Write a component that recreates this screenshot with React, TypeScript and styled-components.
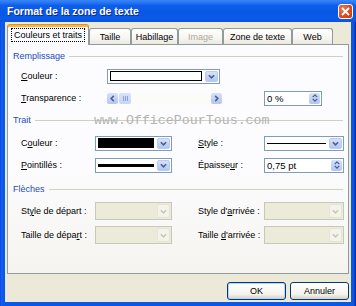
import React, { FC, ReactNode } from "react";
import styled, { createGlobalStyle } from "styled-components";

const GlobalStyle = createGlobalStyle`
  html, body { margin: 0; padding: 0; background: #0a4fd8; }
  body { font-family: "Liberation Sans", Arial, sans-serif; font-size: 9px; color: #000; }
  * { box-sizing: border-box; }
`;

const Chevron: FC<{ dir: "down" | "up" | "left" | "right"; color?: string; size?: number }> = ({ dir, color = "#4d6185", size = 7 }) => {
  const rot = { down: 0, up: 180, left: 90, right: -90 }[dir];
  return (
    <svg width={size} height={size} viewBox="0 0 8 8" style={{ transform: `rotate(${rot}deg)` }}>
      <path d="M1 2.5 L4 5.5 L7 2.5" fill="none" stroke={color} strokeWidth="1.8" />
    </svg>
  );
};

const Dropdown: FC<{ width: number; height: number; disabled?: boolean; children?: ReactNode }> = ({ width, height, disabled, children }) => (
  <DropBox $w={width} $h={height} $disabled={disabled}>
    <DropContent>{children}</DropContent>
    <ArrowBtn $disabled={disabled}>
      <Chevron dir="down" color={disabled ? "#c9c7ba" : "#4d6185"} />
    </ArrowBtn>
  </DropBox>
);

const Spin: FC<{ width: number; value: string }> = ({ width, value }) => (
  <SpinBox $w={width}>
    <SpinText>{value}</SpinText>
    <SpinBtns>
      <Chevron dir="up" size={6} />
      <Chevron dir="down" size={6} />
    </SpinBtns>
  </SpinBox>
);

const Slider: FC = () => (
  <Track>
    <SlideBtn><Chevron dir="left" /></SlideBtn>
    <Thumb>
      <Grip /><Grip /><Grip />
    </Thumb>
    <TrackSpace />
    <SlideBtn><Chevron dir="right" /></SlideBtn>
  </Track>
);

const App: FC = () => (
  <>
    <GlobalStyle />
    <Window>
      <TitleBar>
        <Title>Format de la zone de texte</Title>
        <CloseBtn>
          <svg width="9" height="9" viewBox="0 0 9 9">
            <path d="M1 1 L8 8 M8 1 L1 8" stroke="#fff" strokeWidth="1.8" />
          </svg>
        </CloseBtn>
      </TitleBar>
      <Client>
        <TabRow>
          <Tab $w={82} $active><Focus>Couleurs et traits</Focus></Tab>
          <Tab $w={42}>Taille</Tab>
          <Tab $w={47}>Habillage</Tab>
          <Tab $w={45} $disabled>Image</Tab>
          <Tab $w={69}>Zone de texte</Tab>
          <Tab $w={41}>Web</Tab>
        </TabRow>
        <Panel>
          <Header $mt={0}>Remplissage</Header>
          <Row $cols="86px auto" $h={16} $mt={5}>
            <Label><u>C</u>ouleur :</Label>
            <Dropdown width={113} height={15}><Swatch $fill="#fff" /></Dropdown>
          </Row>
          <Row $cols="86px 115px 42px 58px" $h={16} $mt={6}>
            <Label><u>T</u>ransparence :</Label>
            <Slider />
            <span />
            <Spin width={58} value="0 %" />
          </Row>

          <Header $mt={7}>Trait</Header>
          <Row $cols="74px 77px 26px 66px 80px" $h={16} $mt={8}>
            <Label>C<u>o</u>uleur :</Label>
            <Dropdown width={77} height={15}><Swatch $fill="#000" /></Dropdown>
            <span />
            <Label><u>S</u>tyle :</Label>
            <Dropdown width={80} height={15}><LineSample $thick={1} /></Dropdown>
          </Row>
          <Row $cols="74px 77px 26px 66px 80px" $h={16} $mt={6}>
            <Label><u>P</u>ointillés :</Label>
            <Dropdown width={77} height={15}><LineSample $thick={3} /></Dropdown>
            <span />
            <Label>Épaisse<u>u</u>r :</Label>
            <Spin width={80} value="0,75 pt" />
          </Row>

          <Header $mt={9}>Flèches</Header>
          <Row $cols="74px 77px 26px 66px 80px" $h={18} $mt={6}>
            <Label>St<u>y</u>le de départ :</Label>
            <Dropdown width={77} height={18} disabled />
            <span />
            <Label>Style d'<u>a</u>rrivée :</Label>
            <Dropdown width={80} height={18} disabled />
          </Row>
          <Row $cols="74px 77px 26px 66px 80px" $h={18} $mt={6}>
            <Label>Taille de dépa<u>r</u>t :</Label>
            <Dropdown width={77} height={18} disabled />
            <span />
            <Label>Taille <u>d</u>'arrivée :</Label>
            <Dropdown width={80} height={18} disabled />
          </Row>

          <Watermark>www.OfficePourTous.com</Watermark>
        </Panel>
        <Buttons>
          <Button $default>OK</Button>
          <Button>Annuler</Button>
        </Buttons>
      </Client>
    </Window>
  </>
);

export default App;


const Window = styled.div`
  width: 356px;
  height: 306px;
  display: flex;
  flex-direction: column;
  background: linear-gradient(to right, #0831d9 0, #1665f0 1px, #0a58e8 3px, #0a58e8 calc(100% - 3px), #0544c8 calc(100% - 1px), #00138c 100%);
`;

const TitleBar = styled.div`
  height: 22px;
  flex: none;
  display: flex;
  align-items: center;
  justify-content: space-between;
  padding: 0 3px 0 7px;
  background: linear-gradient(#3a86f8 0%, #2b79f4 10%, #0d5fea 25%, #0858e6 55%, #0b5be9 85%, #0a52dc 100%);
`;

const Title = styled.span`
  color: #fff;
  font-weight: bold;
  font-size: 10.5px;
  text-shadow: 1px 1px 0 #0a2a8c;
`;

const CloseBtn = styled.div`
  width: 15px;
  height: 15px;
  border: 1px solid #fff;
  border-radius: 3px;
  display: flex;
  align-items: center;
  justify-content: center;
  background: radial-gradient(circle at 30% 30%, #ec7a52, #df4a1c 55%, #c4380e);
`;

const Client = styled.div`
  flex: 1;
  margin: 0 5px 4px;
  padding: 3px 2px 0;
  background: #ece9d8;
  display: flex;
  flex-direction: column;
`;

const TabRow = styled.div`
  display: flex;
  align-items: flex-end;
  height: 19px;
  position: relative;
  z-index: 1;
`;

const Tab = styled.div<{ $w: number; $active?: boolean; $disabled?: boolean }>`
  width: ${p => p.$w}px;
  height: ${p => (p.$active ? 20 : 16)}px;
  margin-bottom: ${p => (p.$active ? -1 : 0)}px;
  display: flex;
  align-items: center;
  justify-content: center;
  border: 1px solid #919b9c;
  border-bottom: none;
  border-radius: 3px 3px 0 0;
  color: ${p => (p.$disabled ? "#aca899" : "#000")};
  background: ${p => (p.$active ? "#fcfcfe" : "linear-gradient(#fefefe, #f7f6f1 60%, #ebe9e0)")};
  border-top: ${p => (p.$active ? "2px solid #f6b93b" : "1px solid #919b9c")};
  box-shadow: ${p => (p.$active ? "0 -1px 0 #e68b2c" : "none")};
  padding-bottom: ${p => (p.$active ? 2 : 0)}px;
`;

const Focus = styled.span`
  border: 1px dotted #000;
  padding: 1px 2px;
`;

const Panel = styled.div`
  position: relative;
  height: 230px;
  border: 1px solid #919b9c;
  padding: 4px 5px 0;
  background: linear-gradient(#fcfcfe 55%, #f5f4ef);
`;

const Header = styled.div<{ $mt: number }>`
  display: flex;
  align-items: center;
  gap: 4px;
  height: 14px;
  margin-top: ${p => p.$mt}px;
  color: #1d4bb8;
  &::after {
    content: "";
    flex: 1;
    height: 1px;
    background: #d0d0bf;
  }
`;

const Row = styled.div<{ $cols: string; $h: number; $mt: number }>`
  display: grid;
  grid-template-columns: ${p => p.$cols};
  align-items: center;
  height: ${p => p.$h}px;
  margin-top: ${p => p.$mt}px;
  padding-left: 8px;
`;

const Label = styled.span`
  white-space: nowrap;
`;

const DropBox = styled.div<{ $w: number; $h: number; $disabled?: boolean }>`
  width: ${p => p.$w}px;
  height: ${p => p.$h}px;
  display: flex;
  border: 1px solid ${p => (p.$disabled ? "#c9c7ba" : "#7f9db9")};
  background: ${p => (p.$disabled ? "#ecead9" : "#fff")};
`;

const DropContent = styled.div`
  flex: 1;
  display: flex;
  align-items: center;
  padding: 0 2px;
`;

const ArrowBtn = styled.div<{ $disabled?: boolean }>`
  width: 13px;
  margin: 1px;
  border-radius: 2px;
  display: flex;
  align-items: center;
  justify-content: center;
  background: ${p => (p.$disabled ? "#f4f3ea" : "linear-gradient(#d6e1fc, #c0d0f8 60%, #b2c6f5)")};
  border: 1px solid ${p => (p.$disabled ? "#e6e4d8" : "#b9cbf3")};
`;

const Swatch = styled.div<{ $fill: string }>`
  flex: 1;
  height: 10px;
  border: 1px solid #000;
  background: ${p => p.$fill};
`;

const LineSample = styled.div<{ $thick: number }>`
  flex: 1;
  height: ${p => p.$thick}px;
  background: #000;
`;

const SpinBox = styled.div<{ $w: number }>`
  width: ${p => p.$w}px;
  height: 15px;
  display: flex;
  border: 1px solid #7f9db9;
  background: #fff;
`;

const SpinText = styled.div`
  flex: 1;
  padding-left: 2px;
  display: flex;
  align-items: center;
  font-size: 9.5px;
`;

const SpinBtns = styled.div`
  width: 11px;
  margin: 1px;
  display: flex;
  flex-direction: column;
  align-items: center;
  justify-content: center;
  border-radius: 2px;
  background: linear-gradient(#d6e1fc, #c0d0f8 60%, #b2c6f5);
  svg { margin: -1px 0; }
`;

const Track = styled.div`
  width: 115px;
  height: 11px;
  display: flex;
  gap: 1px;
  background: #fbfbf8;
`;

const SlideBtn = styled.div`
  width: 11px;
  height: 11px;
  border-radius: 2px;
  display: flex;
  align-items: center;
  justify-content: center;
  background: linear-gradient(#d6e1fc, #c0d0f8 60%, #b2c6f5);
`;

const Thumb = styled.div`
  width: 12px;
  height: 11px;
  border-radius: 2px;
  display: flex;
  align-items: center;
  justify-content: center;
  gap: 1px;
  background: linear-gradient(#d8e3fc, #c6d5f9);
`;

const Grip = styled.span`
  width: 1px;
  height: 5px;
  background: #8ba0d4;
`;

const TrackSpace = styled.div`
  flex: 1;
`;

const Watermark = styled.div`
  position: absolute;
  left: 86px;
  top: 69px;
  font-family: "Liberation Mono", "Courier New", monospace;
  font-size: 13.3px;
  line-height: 14px;
  color: #b4b4b4;
  pointer-events: none;
`;

const Buttons = styled.div`
  display: flex;
  justify-content: flex-end;
  gap: 4px;
  margin-top: 8px;
`;

const Button = styled.div<{ $default?: boolean }>`
  width: 59px;
  height: 18px;
  display: flex;
  align-items: center;
  justify-content: center;
  border: 1px solid #003c74;
  border-radius: 3px;
  background: linear-gradient(#fff, #f4f3ee 70%, #d6d0c5);
  box-shadow: ${p => (p.$default ? "inset 0 0 0 1px #b8d1f8" : "none")};
`;
